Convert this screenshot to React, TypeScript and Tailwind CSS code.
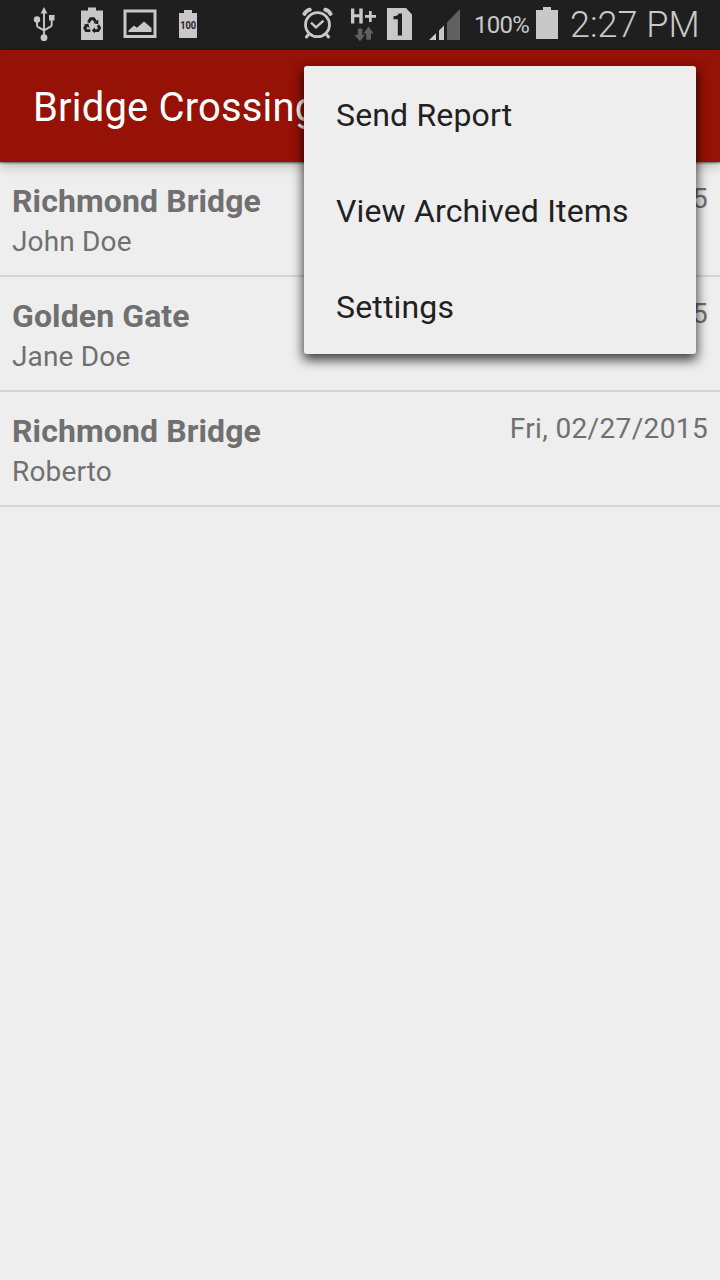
import type { ReactNode } from 'react';

const crossings = [
  { bridge: 'Richmond Bridge', person: 'John Doe', date: 'Fri, 02/27/2015' },
  { bridge: 'Golden Gate', person: 'Jane Doe', date: 'Fri, 02/27/2015' },
  { bridge: 'Richmond Bridge', person: 'Roberto', date: 'Fri, 02/27/2015' },
];

const menuItems = ['Send Report', 'View Archived Items', 'Settings'];

function Icon({ width, className = '', children }: { width: number; className?: string; children: ReactNode }) {
  return (
    <svg width={width} height={50} viewBox={`0 0 ${width} 50`} className={`shrink-0 ${className}`} fill="#c8c8c8">
      {children}
    </svg>
  );
}

function UsbIcon() {
  return (
    <Icon width={24} className="ml-8">
      <path d="M12 7l3.400 6.500H8.600z" />
      <circle cx="12" cy="37.700" r="3.400" />
      <circle cx="5" cy="19.500" r="3.200" />
      <rect x="17" y="15" width="5.500" height="5.500" />
      <path d="M12 12v25M5 20v5.500q0 1.200 1.200 1.700L12 30.300M19.700 20v5q0 1.200-1.200 1.700L12 30.300" fill="none" stroke="#c8c8c8" strokeWidth="1.900" />
    </Icon>
  );
}

function RecycleBatteryIcon() {
  return (
    <Icon width={22} className="ml-[25px]">
      <path d="M0 10.500h7V7.500h8v3h7V40H0z" />
      <g fill="none" stroke="#1f1f1f" strokeWidth="2.900">
        <path d="M7.300 22.500L9.700 18.800h3l2 3" />
        <path d="M17 25.200l1.600 2.800-1.600 2.600h-4.300" />
        <path d="M9.300 30.600H5.200L3.800 28l1.700-2.600" />
      </g>
      <path d="M17.300 19.500v4.800l-4.800-1zM14 27.300v6l-3.300-2.900zM2.600 24.800l4.700-1.300 1.200 4.600z" fill="#1f1f1f" />
    </Icon>
  );
}

function PictureIcon() {
  return (
    <Icon width={34} className="ml-5">
      <rect x="2" y="11" width="30" height="25.500" fill="none" stroke="#c8c8c8" strokeWidth="3" />
      <path d="M5.500 32v-1.500l5.500-5 3 2.300 7-6.300 7.500 6.500v4z" />
    </Icon>
  );
}

function FullBatteryIcon() {
  return (
    <Icon width={18} className="ml-[22px]">
      <path d="M0 13h5v-3h8v3h5v25H0z" />
      <text x="9.200" y="29.300" fontSize="10.500" fontWeight="700" textAnchor="middle" textLength="16" lengthAdjust="spacingAndGlyphs" fill="#1f1f1f">100</text>
    </Icon>
  );
}

function AlarmIcon() {
  return (
    <Icon width={32} className="ml-auto">
      <g fill="none" stroke="#c8c8c8">
        <circle cx="15.500" cy="24.700" r="12" strokeWidth="2.800" />
        <path d="M9 22.700l5 4.700 7.500-6.700" strokeWidth="2.400" />
        <path d="M6 35l-1.500 2M25 35l1.500 2" strokeWidth="3" strokeLinecap="round" />
        <path d="M2.500 13.800Q4 10.800 7.700 9.700M28.500 13.800Q27 10.800 23.300 9.700" strokeWidth="4" strokeLinecap="round" />
      </g>
    </Icon>
  );
}

function NetworkIcon() {
  return (
    <Icon width={26} className="ml-[17px]">
      <path d="M0 8.500h3.300v5.700h5V8.500h3.400v15H8.300v-6.300h-5v6.300H0zM18 11h2.700v4H25v2.700h-4.300V22H18v-4.300h-4V15h4z" />
      <path d="M6.800 28.500h4.500V35H14l-5 6.300L3.500 35h3.300zM17.500 26.500l5.200 7H20v6.300h-4.700v-6.300H12.500z" fill="#606060" />
    </Icon>
  );
}

function SimIcon() {
  return (
    <Icon width={25} className="ml-[10px]">
      <path d="M0 8h19l6 6.500V40H0z" />
      <path d="M11.700 13.500H15V35.500h-4.200V19.200H6.500v-3q4.700-.2 5.200-2.700z" fill="#1f1f1f" />
    </Icon>
  );
}

function SignalIcon() {
  return (
    <Icon width={31} className="ml-[17px]">
      <path d="M0 40l7-6.700V40zM10 30.500l5-5V40h-5z" />
      <path d="M18 22.500L31 9v31H18z" fill="#606060" />
    </Icon>
  );
}

function BatteryIcon() {
  return (
    <Icon width={22} className="ml-[7px]">
      <path d="M0 10h7V7h8v3h7v29H0z" />
    </Icon>
  );
}

function StatusBar() {
  return (
    <div className="flex h-[50px] items-center bg-[#1f1f1f] text-[#c8c8c8]">
      <UsbIcon />
      <RecycleBatteryIcon />
      <PictureIcon />
      <FullBatteryIcon />
      <AlarmIcon />
      <NetworkIcon />
      <SimIcon />
      <SignalIcon />
      <span className="ml-[14px] w-[55px] text-[24px] leading-[50px] tracking-[-0.7px] whitespace-nowrap">100%</span>
      <BatteryIcon />
      <span className="ml-3 w-[150px] text-[36px] leading-[48px] font-light whitespace-nowrap">2:27 PM</span>
    </div>
  );
}

function OverflowMenu() {
  return (
    <ul className="absolute top-[66px] right-6 w-[392px] rounded-[3px] bg-[#eeeeee] shadow-[0_5px_12px_1px_rgba(0,0,0,0.75)]">
      {menuItems.map((item) => (
        <li key={item} className="flex h-24 items-center px-8 pt-0.5 text-[32px] tracking-[0.16px] text-[#212121]">
          {item}
        </li>
      ))}
    </ul>
  );
}

export default function App() {
  return (
    <div className="relative flex h-[1280px] w-[720px] flex-col overflow-hidden bg-[#eeeeee] font-[Roboto,sans-serif]">
      <StatusBar />
      <header className="relative flex h-28 shrink-0 items-center bg-[#961106] pt-1 pr-8 pl-[33px] shadow-[0_1px_2px_rgba(0,0,0,0.55),0_3px_12px_rgba(0,0,0,0.25)]">
        <h1 className="text-[40px] tracking-[0.16px] text-white">Bridge Crossings</h1>
      </header>
      <main>
        {crossings.map((crossing, index) => (
          <div key={index} className="flex h-[115px] justify-between border-b-2 border-[#d5d5d5] px-3 text-[#707070]">
            <div className="pt-5">
              <h2 className="text-[32px] leading-[38px] font-bold tracking-[0.1px]">{crossing.bridge}</h2>
              <p className="text-[28px] leading-[44px] tracking-[0.16px]">{crossing.person}</p>
            </div>
            <span className="pt-5 text-[28px] leading-[34px] tracking-[0.36px]">{crossing.date}</span>
          </div>
        ))}
      </main>
      <OverflowMenu />
    </div>
  );
}
